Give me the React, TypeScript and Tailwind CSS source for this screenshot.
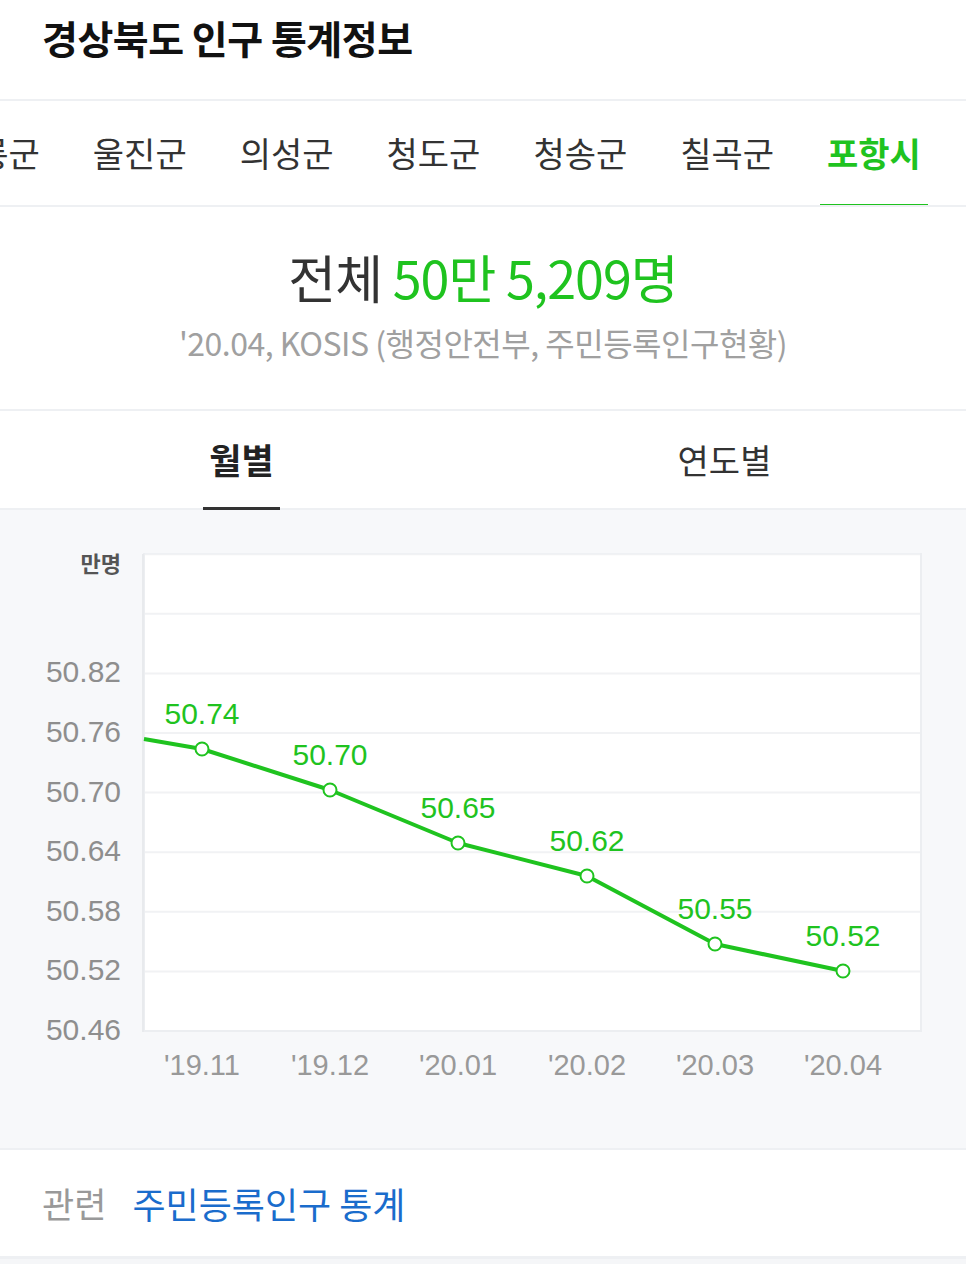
import React from 'react';

const regions = ['울릉군', '울진군', '의성군', '청도군', '청송군', '칠곡군', '포항시'];

// chart coordinates are relative to the chart section (top = 511px of page)
const points = [
  { x: 202, y: 239, label: '50.74', month: "'19.11" },
  { x: 330, y: 280, label: '50.70', month: "'19.12" },
  { x: 458, y: 333, label: '50.65', month: "'20.01" },
  { x: 587, y: 366, label: '50.62', month: "'20.02" },
  { x: 715, y: 434, label: '50.55', month: "'20.03" },
  { x: 843, y: 461, label: '50.52', month: "'20.04" },
];

const yTicks = ['50.46', '50.52', '50.58', '50.64', '50.70', '50.76', '50.82'];

const GREEN = '#1fc31f';

function Chart() {
  const bottom = 521;
  const step = 59.6;
  const grid = Array.from({ length: 8 }, (_, i) => bottom - step * (i + 1));
  const line = `M144 229 ` + points.map((p) => `L${p.x} ${p.y}`).join(' ');

  return (
    <svg width="966" height="638" viewBox="0 0 966 638" className="block">
      <rect x="144" y="44" width="777" height="477" fill="#ffffff" stroke="#eceef1" strokeWidth="2" />
      <line x1="143" y1="44" x2="143" y2="522" stroke="#e8eaed" strokeWidth="2" />
      {grid.map((y) => (
        <line key={y} x1="145" y1={y} x2="920" y2={y} stroke="#f1f2f4" strokeWidth="2" />
      ))}

      <text
        x="121"
        y="56"
        textAnchor="end"
        dominantBaseline="middle"
        fontFamily="'Noto Sans CJK KR', sans-serif"
        fontWeight="700"
        fontSize="22"
        fill="#555555"
      >
        만명
      </text>

      {yTicks.map((t, i) => (
        <text
          key={t}
          x="121"
          y={bottom - step * i + 1}
          textAnchor="end"
          dominantBaseline="middle"
          fontFamily="'Liberation Sans', Arial, sans-serif"
          fontSize="30"
          fill="#8e8e8e"
        >
          {t}
        </text>
      ))}

      <path d={line} fill="none" stroke={GREEN} strokeWidth="4" strokeLinejoin="round" />
      {points.map((p) => (
        <g key={p.month}>
          <circle cx={p.x} cy={p.y} r="6.5" fill="#ffffff" stroke={GREEN} strokeWidth="2" />
          <text
            x={p.x}
            y={p.y - 33}
            textAnchor="middle"
            dominantBaseline="middle"
            fontFamily="'Liberation Sans', Arial, sans-serif"
            fontSize="30"
            fill={GREEN}
          >
            {p.label}
          </text>
          <text
            x={p.x}
            y="557"
            textAnchor="middle"
            dominantBaseline="middle"
            fontFamily="'Liberation Sans', Arial, sans-serif"
            fontSize="29"
            fill="#999999"
          >
            {p.month}
          </text>
        </g>
      ))}
    </svg>
  );
}

export default function App() {
  return (
    <div className="w-[966px] h-[1264px] overflow-hidden bg-[#f5f6f8] font-['Noto_Sans_CJK_KR','Noto_Sans',sans-serif]">
      <div className="bg-white">
        {/* 제목 */}
        <div className="h-[99px] px-[42px]">
          <h1 className="text-[39px] leading-[74px] font-bold text-[#111] tracking-[-0.5px]">경상북도 인구 통계정보</h1>
        </div>

        {/* 지역 탭 */}
        <div className="border-t-2 border-b-2 border-[#eef0f3] overflow-hidden">
          <div className="flex h-[104px] ml-[-61px] gap-[39px]">
            {regions.map((r) => {
              const active = r === '포항시';
              return (
                <div key={r} className="relative shrink-0 flex items-center px-[7px] pb-[2px]">
                  <span
                    className={`text-[34px] whitespace-nowrap ${
                      active ? 'font-bold text-[#1fc31f]' : 'text-[#333]'
                    }`}
                  >
                    {r}
                  </span>
                  {active && <span className="absolute left-0 right-0 bottom-[-2px] h-[3px] bg-[#1fc31f]" />}
                </div>
              );
            })}
          </div>
        </div>

        {/* 전체 인구 */}
        <div className="h-[202px] flex flex-col items-center pt-[38px]">
          <div className="text-[52px] leading-[64px] tracking-[-1px] text-[#333]">
            전체 <span className="text-[#1fc31f]">50만 5,209명</span>
          </div>
          <div className="mt-[12px] text-[32px] leading-[42px] tracking-[-0.5px] text-[#a0a0a0]">
            '20.04, KOSIS (행정안전부, 주민등록인구현황)
          </div>
        </div>

        {/* 월별 / 연도별 */}
        <div className="flex h-[101px] border-t-2 border-b-2 border-[#eef0f3]">
          <div className="flex-1 flex justify-center">
            <div className="relative flex items-center px-[6px]">
              <span className="text-[35px] font-bold text-[#222]">월별</span>
              <span className="absolute left-0 right-0 bottom-[-2px] h-[3px] bg-[#333]" />
            </div>
          </div>
          <div className="flex-1 flex justify-center items-center">
            <span className="text-[34px] text-[#333]">연도별</span>
          </div>
        </div>
      </div>

      {/* 차트 */}
      <div className="bg-[#f7f8fa] h-[638px]">
        <Chart />
      </div>

      {/* 관련 링크 */}
      <div className="bg-white border-t-2 border-b-[3px] border-[#eef0f3] h-[111px] flex items-center px-[42px] gap-[26px]">
        <span className="text-[35px] text-[#999]">관련</span>
        <span className="text-[36px] text-[#1a6ccc]">주민등록인구 통계</span>
      </div>
    </div>
  );
}
